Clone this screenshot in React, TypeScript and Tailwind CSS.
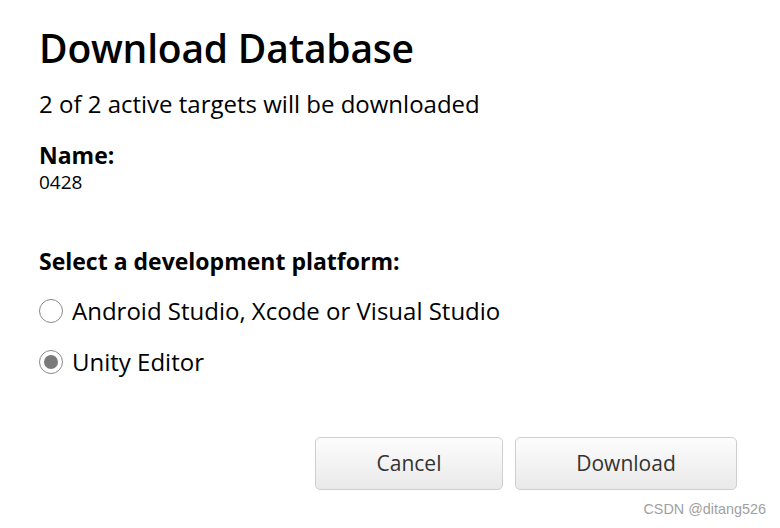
import { useState } from "react"

const platforms = [
  { id: "native", label: "Android Studio, Xcode or Visual Studio" },
  { id: "unity", label: "Unity Editor" },
]

function Radio({ checked }: { checked: boolean }) {
  return (
    <span className="flex size-[24px] shrink-0 items-center justify-center rounded-full border-[1.5px] border-[#8a8a8a] bg-white">
      {checked && <span className="size-[14px] rounded-full bg-[#7a7a7a]" />}
    </span>
  )
}

export default function App() {
  const [platform, setPlatform] = useState("unity")

  return (
    <div className="relative h-[528px] w-[780px] bg-white font-['Open_Sans',sans-serif] text-black">
      <div className="flex flex-col px-[39px] pt-[22px]">
        <h1 className="text-[39px] font-semibold leading-[52px] tracking-[-0.2px]">Download Database</h1>
        <p className="mt-[15px] text-[24px] leading-[30px]">2 of 2 active targets will be downloaded</p>

        <div className="mt-[23px] flex flex-col">
          <span className="text-[23px] font-bold leading-[26px]">Name:</span>
          <span className="text-[19px] leading-[28px]">0428</span>
        </div>

        <div className="mt-[50px] flex flex-col">
          <span className="text-[23px] font-bold leading-[30px]">Select a development platform:</span>
          <div className="mt-[20px] flex flex-col gap-[21px]">
            {platforms.map((p) => (
              <label
                key={p.id}
                className="flex cursor-pointer items-center gap-[9px] text-[24px] leading-[30px]"
                onClick={() => setPlatform(p.id)}
              >
                <Radio checked={platform === p.id} />
                <span>{p.label}</span>
              </label>
            ))}
          </div>
        </div>

        <div className="mt-[60px] flex justify-end gap-[12px] pr-[4px]">
          <button className="h-[53px] w-[188px] rounded-[5px] border border-[#cfcfcf] bg-gradient-to-b from-[#fdfdfd] to-[#e9e9e9] text-[21px] text-[#333]">
            Cancel
          </button>
          <button className="h-[53px] w-[222px] rounded-[5px] border border-[#cfcfcf] bg-gradient-to-b from-[#fdfdfd] to-[#e9e9e9] text-[21px] text-[#333]">
            Download
          </button>
        </div>
      </div>

      <span className="absolute bottom-[7px] right-[14px] font-['Liberation_Sans',sans-serif] text-[14.4px] text-[#a0a0a0]">
        CSDN @ditang526
      </span>
    </div>
  )
}
